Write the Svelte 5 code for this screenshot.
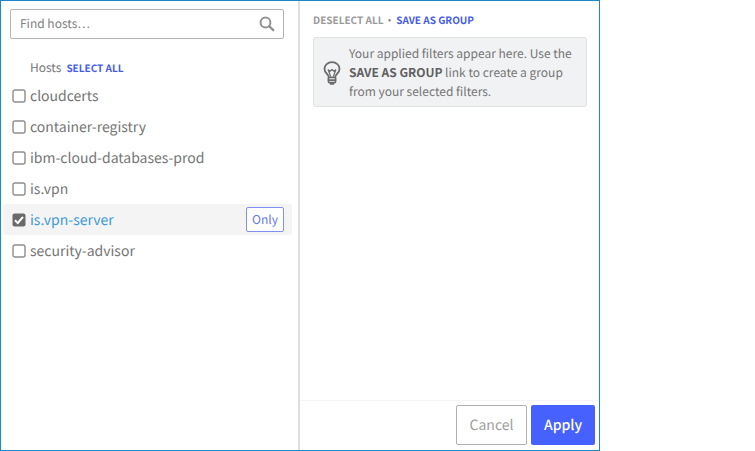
<script>
  let query = $state('');
  let hosts = $state([
    { name: 'cloudcerts', checked: false },
    { name: 'container-registry', checked: false },
    { name: 'ibm-cloud-databases-prod', checked: false },
    { name: 'is.vpn', checked: false },
    { name: 'is.vpn-server', checked: true },
    { name: 'security-advisor', checked: false }
  ]);

  const visible = $derived(hosts.filter((h) => h.name.includes(query.trim())));

  function setAll(value) {
    for (const host of hosts) host.checked = value;
  }

  function only(name) {
    for (const host of hosts) host.checked = host.name === name;
  }
</script>

<div class="dialog">
  <section class="hosts">
    <div class="search">
      <input type="text" aria-label="Find hosts" placeholder="Find hosts…" bind:value={query} />
      <svg width="16" height="16" viewBox="0 0 16 16" aria-hidden="true">
        <circle cx="6.5" cy="6.5" r="4.9" fill="none" stroke="#929292" stroke-width="2" />
        <path d="M10.2 10.2 14.2 14.2" stroke="#929292" stroke-width="2.4" stroke-linecap="round" />
      </svg>
    </div>

    <div class="heading">
      <span>Hosts</span>
      <button type="button" class="link" onclick={() => setAll(true)}>SELECT ALL</button>
    </div>

    <ul>
      {#each visible as host (host.name)}
        <li class:selected={host.checked}>
          <label>
            <input type="checkbox" bind:checked={host.checked} />
            <svg class="box" width="14" height="14" viewBox="0 0 14 14" aria-hidden="true">
              {#if host.checked}
                <rect x="0.5" y="0.5" width="13" height="13" rx="2" fill="#6a6a6a" />
                <path d="M3 7.2 5.8 10 11 3.8" fill="none" stroke="#fff" stroke-width="2" />
              {:else}
                <rect x="1" y="1" width="12" height="12" rx="2" fill="#fff" stroke="#8e8e8e" stroke-width="1.4" />
              {/if}
            </svg>
            <span>{host.name}</span>
          </label>
          {#if host.checked}
            <button type="button" class="only" onclick={() => only(host.name)}>Only</button>
          {/if}
        </li>
      {/each}
    </ul>
  </section>

  <section class="filters">
    <div class="content">
      <div class="actions">
        <button type="button" class="link muted" onclick={() => setAll(false)}>DESELECT ALL</button>
        <span class="dot">·</span>
        <button type="button" class="link">SAVE AS GROUP</button>
      </div>
      <div class="note">
        <svg width="18" height="24" viewBox="0 0 18 24" fill="none" stroke="#6b6b6b" aria-hidden="true">
          <path d="M5.8 16.4C5.8 13.4 1.5 12.2 1.5 7.9 1.5 4 4.8 1.2 9 1.2s7.5 2.8 7.5 6.7c0 4.3-4.3 5.5-4.3 8.500z" stroke-width="1.8" stroke-linejoin="round" />
          <path d="M7.6 15.5 5.2 8.8 7 10.3 9 8.5 11 10.3 12.8 8.8 10.4 15.5" stroke-width="1.2" stroke-linejoin="round" />
          <path d="M5.4 17v3.2q0 1.4 1.4 1.4h4.4q1.4 0 1.4-1.4V17M5.5 19.2h7M7.5 22.8h3" stroke-width="1.7" stroke-linecap="round" />
        </svg>
        <p>
          Your applied filters appear here. Use the <strong>SAVE AS GROUP</strong> link to create a
          group from your selected filters.
        </p>
      </div>
    </div>
    <footer>
      <button type="button" class="cancel">Cancel</button>
      <button type="button" class="apply">Apply</button>
    </footer>
  </section>
</div>

<style>
  :global(body) {
    background: #fff;
  }

  .dialog,
  .dialog * {
    box-sizing: border-box;
  }

  .dialog {
    display: grid;
    grid-template-columns: 1fr 1fr;
    width: 100%;
    max-width: 600px;
    min-height: 100vh;
    border: 1px solid #1b87c5;
    background: #fff;
    color: #757575;
    font: 14px/20px 'Noto Sans CJK SC', 'Source Sans Pro', sans-serif;
    text-rendering: geometricPrecision;
  }

  button,
  input {
    margin: 0;
    font: inherit;
    text-rendering: inherit;
  }

  button {
    padding: 0;
    cursor: pointer;
  }

  .hosts {
    padding: 8px 6px 8px 2px;
    border-right: 2px solid #dfdfdf;
  }

  .search {
    display: flex;
    align-items: center;
    height: 30px;
    margin: 0 8px 0 7px;
    padding-right: 8px;
    border: 1px solid #b4b4b4;
    border-radius: 2px;
  }

  .search input {
    flex: 1;
    min-width: 0;
    padding: 0 9px;
    border: 0;
    outline: 0;
    background: transparent;
    color: #757575;
    font-size: 12px;
  }

  .search input::placeholder {
    color: #808080;
    opacity: 1;
  }

  .heading {
    display: flex;
    align-items: center;
    gap: 5px;
    margin: 19px 0 2px 27px;
    font-size: 12px;
  }

  .link {
    border: 0;
    background: none;
    color: #465ce8;
    font-size: 10px;
    font-weight: 700;
  }

  .muted {
    color: #9a9a9a;
  }

  ul {
    margin: 0;
    padding: 0;
    list-style: none;
  }

  li {
    display: flex;
    align-items: center;
    justify-content: space-between;
    height: 31px;
    padding: 0 8px 0 9px;
    border-radius: 3px;
  }

  li.selected {
    background: #f4f4f4;
    color: #3d9ad8;
  }

  label {
    position: relative;
    display: flex;
    align-items: center;
    gap: 4px;
    cursor: pointer;
  }

  label input {
    position: absolute;
    width: 14px;
    height: 14px;
    opacity: 0;
  }

  .only {
    width: 38px;
    height: 25px;
    border: 1px solid #8090f4;
    border-radius: 2px;
    background: #fff;
    color: #6377f2;
    font-size: 12px;
  }

  .filters {
    display: flex;
    flex-direction: column;
  }

  .content {
    flex: 1;
    padding: 9px 12px 9px 13px;
  }

  .actions {
    display: flex;
    align-items: center;
    gap: 4px;
  }

  .dot {
    font-family: 'Liberation Sans', Arial, sans-serif;
    font-weight: 700;
  }

  .note {
    display: flex;
    align-items: center;
    gap: 8px;
    margin-top: 7px;
    padding: 6px 9px 5px;
    border: 1px solid #dfe3e6;
    border-radius: 3px;
    background: #f1f2f4;
    font-size: 12px;
    line-height: 19px;
  }

  .note svg {
    flex: none;
  }

  p {
    margin: 0;
  }

  strong {
    color: #606060;
  }

  footer {
    display: flex;
    justify-content: flex-end;
    gap: 4px;
    padding: 4px 4px 5px;
    border-top: 1px solid #f5f5f5;
  }

  footer button {
    height: 40px;
    border-radius: 2px;
  }

  .cancel {
    width: 71px;
    border: 1px solid #b0b0b0;
    background: #fff;
    color: #a0a0a0;
  }

  .apply {
    width: 64px;
    border: 0;
    background: #4661ff;
    color: #fff;
    font-weight: 500;
  }
</style>
